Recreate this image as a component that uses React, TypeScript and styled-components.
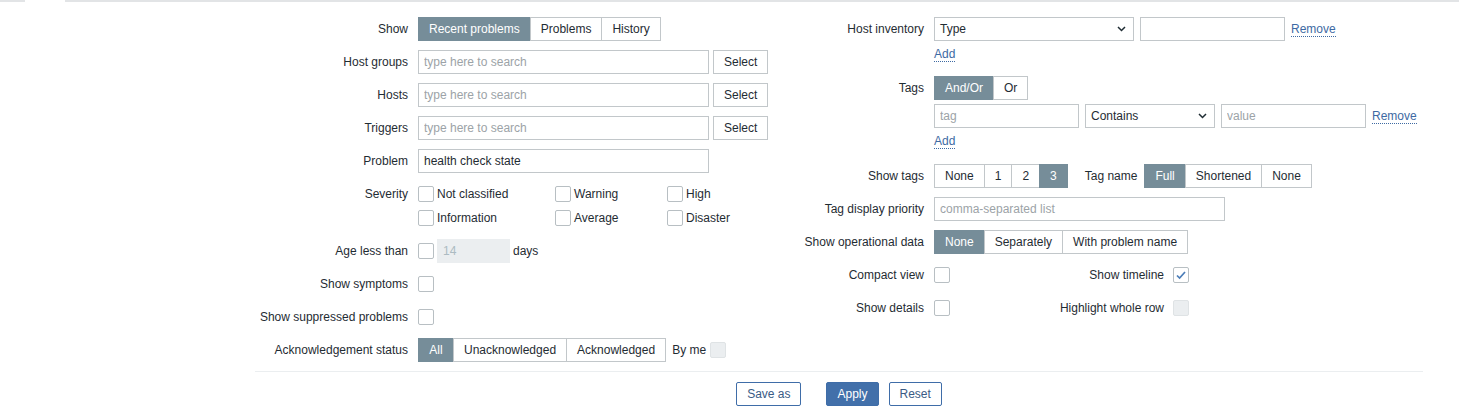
import React from "react";
import styled, { createGlobalStyle } from "styled-components";

const GlobalStyle = createGlobalStyle`
  body {
    margin: 0;
    background: #ffffff;
    color: #1f2c33;
    font-family: "Liberation Sans", Arial, sans-serif;
    font-size: 12px;
  }
  * {
    box-sizing: border-box;
  }
`;

const TopRule = styled.div`
  display: flex;
  height: 2px;
`;

const RuleLine = styled.div<{ $width?: number }>`
  background: #e2e4e6;
  ${({ $width }) => ($width ? `width: ${$width}px;` : "flex: 1;")}
`;

const RuleGap = styled.div`
  width: 40px;
`;

const Form = styled.div`
  margin-left: 255px;
  width: 1168px;
  padding-top: 15px;
`;

const Columns = styled.div`
  display: grid;
  grid-template-columns: 535px 1fr;
`;

const Column = styled.div`
  display: flex;
  flex-direction: column;
  gap: 9px;
`;

const Row = styled.div<{ $label: number }>`
  display: grid;
  grid-template-columns: ${({ $label }) => $label}px 1fr;
  align-items: start;
`;

const Label = styled.div`
  text-align: right;
  padding-right: 10px;
  line-height: 24px;
  white-space: nowrap;
`;

const Line = styled.div<{ $gap?: number; $mt?: number }>`
  display: flex;
  align-items: center;
  height: 24px;
  gap: ${({ $gap }) => $gap ?? 6}px;
  margin-top: ${({ $mt }) => $mt ?? 0}px;
`;

const Stack = styled.div`
  display: flex;
  flex-direction: column;
`;

const Segmented = styled.div<{ $ml?: number }>`
  display: inline-flex;
  height: 24px;
  margin-left: ${({ $ml }) => $ml ?? 0}px;
`;

const Segment = styled.span<{ $active?: boolean; $min?: number }>`
  display: inline-flex;
  align-items: center;
  justify-content: center;
  height: 24px;
  padding: 0 10px;
  min-width: ${({ $min }) => $min ?? 0}px;
  border: 1px solid ${({ $active }) => ($active ? "#768d99" : "#c2c7ca")};
  background: ${({ $active }) => ($active ? "#768d99" : "#ffffff")};
  color: ${({ $active }) => ($active ? "#ffffff" : "#1f2c33")};
  white-space: nowrap;
  & + & {
    margin-left: -1px;
  }
`;

const TextInput = styled.input<{ $width: number }>`
  width: ${({ $width }) => $width}px;
  height: 24px;
  padding: 0 5px;
  border: 1px solid #c2c7ca;
  background: #ffffff;
  color: #1f2c33;
  font-family: inherit;
  font-size: 12px;
  outline: none;
  &::placeholder {
    color: #9ca3a7;
  }
  &:disabled {
    background: #ebeef0;
    border-color: #ebeef0;
    color: #acbbc2;
  }
`;

const GreyButton = styled.button`
  height: 24px;
  padding: 0 10px;
  border: 1px solid #c2c7ca;
  background: #ffffff;
  color: #1f2c33;
  font-family: inherit;
  font-size: 12px;
`;

const Box = styled.span<{ $disabled?: boolean }>`
  display: inline-flex;
  align-items: center;
  justify-content: center;
  flex: none;
  width: 16px;
  height: 16px;
  border: 1px solid ${({ $disabled }) => ($disabled ? "#dfe3e5" : "#b8bfc3")};
  border-radius: 2px;
  background: ${({ $disabled }) => ($disabled ? "#ebeef0" : "#ffffff")};
`;

const CheckGrid = styled.div`
  display: grid;
  grid-template-columns: 137px 112px auto;
  grid-auto-rows: 24px;
`;

const CheckItem = styled.label`
  display: flex;
  align-items: center;
  gap: 3px;
  white-space: nowrap;
`;

const SelectBox = styled.div<{ $width: number }>`
  display: flex;
  align-items: center;
  justify-content: space-between;
  width: ${({ $width }) => $width}px;
  height: 24px;
  padding: 0 7px 0 5px;
  border: 1px solid #c2c7ca;
  background: #ffffff;
`;

const LinkText = styled.a`
  display: inline-block;
  color: #3e6aa3;
  line-height: 14px;
  border-bottom: 1px dotted #3e6aa3;
  text-decoration: none;
  cursor: pointer;
`;

const AddLine = styled.div<{ $mb?: number }>`
  height: 18px;
  margin: 4px 0 ${({ $mb }) => $mb ?? 4}px;
  display: flex;
  align-items: center;
`;

const InlineLabel = styled.span<{ $width?: number; $ml?: number }>`
  display: inline-flex;
  align-items: center;
  white-space: nowrap;
  margin-left: ${({ $ml }) => $ml ?? 0}px;
  ${({ $width }) => ($width ? `width: ${$width}px; justify-content: flex-end;` : "")}
`;

const Divider = styled.div`
  margin-top: 9px;
  height: 1px;
  background: #ebeef0;
`;

const Footer = styled.div`
  display: flex;
  justify-content: center;
  gap: 10px;
  padding-top: 10px;
`;

const FooterButton = styled.button<{ $primary?: boolean; $mr?: number }>`
  height: 24px;
  padding: 0 10px;
  margin-right: ${({ $mr }) => $mr ?? 0}px;
  border: 1px solid #3f6da8;
  border-radius: 2px;
  background: ${({ $primary }) => ($primary ? "#4270aa" : "#ffffff")};
  color: ${({ $primary }) => ($primary ? "#ffffff" : "#3a5b85")};
  font-family: inherit;
  font-size: 12px;
`;

const Chevron = () => (
  <svg width="9" height="6" viewBox="0 0 9 6">
    <path d="M1 1l3.5 3.5L8 1" fill="none" stroke="#1f2c33" strokeWidth="1.5" />
  </svg>
);

const Tick = () => (
  <svg width="12" height="12" viewBox="0 0 12 12">
    <path d="M2 6.5l2.6 2.6L10 3" fill="none" stroke="#4b7db8" strokeWidth="1.7" />
  </svg>
);

const Check: React.FC<{ checked?: boolean; disabled?: boolean }> = ({ checked, disabled }) => (
  <Box $disabled={disabled}>{checked && <Tick />}</Box>
);

const severities = ["Not classified", "Warning", "High", "Information", "Average", "Disaster"];

const App: React.FC = () => {
  return (
    <>
      <GlobalStyle />
      <TopRule>
        <RuleLine $width={25} />
        <RuleGap />
        <RuleLine />
      </TopRule>
      <Form>
        <Columns>
          <Column>
            <Row $label={163}>
              <Label>Show</Label>
              <Segmented>
                <Segment $active>Recent problems</Segment>
                <Segment>Problems</Segment>
                <Segment>History</Segment>
              </Segmented>
            </Row>
            {["Host groups", "Hosts", "Triggers"].map((name) => (
              <Row $label={163} key={name}>
                <Label>{name}</Label>
                <Line $gap={4}>
                  <TextInput $width={291} placeholder="type here to search" />
                  <GreyButton>Select</GreyButton>
                </Line>
              </Row>
            ))}
            <Row $label={163}>
              <Label>Problem</Label>
              <Line>
                <TextInput $width={291} defaultValue="health check state" />
              </Line>
            </Row>
            <Row $label={163}>
              <Label>Severity</Label>
              <CheckGrid>
                {severities.map((s) => (
                  <CheckItem key={s}>
                    <Check />
                    {s}
                  </CheckItem>
                ))}
              </CheckGrid>
            </Row>
            <Row $label={163}>
              <Label>Age less than</Label>
              <Line $gap={3}>
                <Check />
                <TextInput $width={73} defaultValue="14" disabled />
                <span>days</span>
              </Line>
            </Row>
            <Row $label={163}>
              <Label>Show symptoms</Label>
              <Line>
                <Check />
              </Line>
            </Row>
            <Row $label={163}>
              <Label>Show suppressed problems</Label>
              <Line>
                <Check />
              </Line>
            </Row>
            <Row $label={163}>
              <Label>Acknowledgement status</Label>
              <Line $gap={0}>
                <Segmented>
                  <Segment $active $min={36}>All</Segment>
                  <Segment>Unacknowledged</Segment>
                  <Segment>Acknowledged</Segment>
                </Segmented>
                <InlineLabel $ml={6}>By me</InlineLabel>
                <InlineLabel $ml={4}>
                  <Check disabled />
                </InlineLabel>
              </Line>
            </Row>
          </Column>

          <Column>
            <Row $label={144}>
              <Label>Host inventory</Label>
              <Stack>
                <Line>
                  <SelectBox $width={200}>
                    <span>Type</span>
                    <Chevron />
                  </SelectBox>
                  <TextInput $width={145} />
                  <LinkText>Remove</LinkText>
                </Line>
                <AddLine>
                  <LinkText>Add</LinkText>
                </AddLine>
              </Stack>
            </Row>
            <Row $label={144}>
              <Label>Tags</Label>
              <Stack>
                <Line>
                  <Segmented>
                    <Segment $active>And/Or</Segment>
                    <Segment>Or</Segment>
                  </Segmented>
                </Line>
                <Line $mt={4}>
                  <TextInput $width={145} placeholder="tag" />
                  <SelectBox $width={130}>
                    <span>Contains</span>
                    <Chevron />
                  </SelectBox>
                  <TextInput $width={145} placeholder="value" />
                  <LinkText>Remove</LinkText>
                </Line>
                <AddLine $mb={5}>
                  <LinkText>Add</LinkText>
                </AddLine>
              </Stack>
            </Row>
            <Row $label={144}>
              <Label>Show tags</Label>
              <Line $gap={0}>
                <Segmented>
                  <Segment>None</Segment>
                  <Segment>1</Segment>
                  <Segment>2</Segment>
                  <Segment $active>3</Segment>
                </Segmented>
                <InlineLabel $ml={17}>Tag name</InlineLabel>
                <Segmented $ml={7}>
                  <Segment $active>Full</Segment>
                  <Segment>Shortened</Segment>
                  <Segment>None</Segment>
                </Segmented>
              </Line>
            </Row>
            <Row $label={144}>
              <Label>Tag display priority</Label>
              <Line>
                <TextInput $width={291} placeholder="comma-separated list" />
              </Line>
            </Row>
            <Row $label={144}>
              <Label>Show operational data</Label>
              <Segmented>
                <Segment $active>None</Segment>
                <Segment>Separately</Segment>
                <Segment>With problem name</Segment>
              </Segmented>
            </Row>
            <Row $label={144}>
              <Label>Compact view</Label>
              <Line $gap={9}>
                <Check />
                <InlineLabel $width={205}>Show timeline</InlineLabel>
                <Check checked />
              </Line>
            </Row>
            <Row $label={144}>
              <Label>Show details</Label>
              <Line $gap={9}>
                <Check />
                <InlineLabel $width={205}>Highlight whole row</InlineLabel>
                <Check disabled />
              </Line>
            </Row>
          </Column>
        </Columns>
        <Divider />
        <Footer>
          <FooterButton $mr={15}>Save as</FooterButton>
          <FooterButton $primary>Apply</FooterButton>
          <FooterButton>Reset</FooterButton>
        </Footer>
      </Form>
    </>
  );
};

export default App;
